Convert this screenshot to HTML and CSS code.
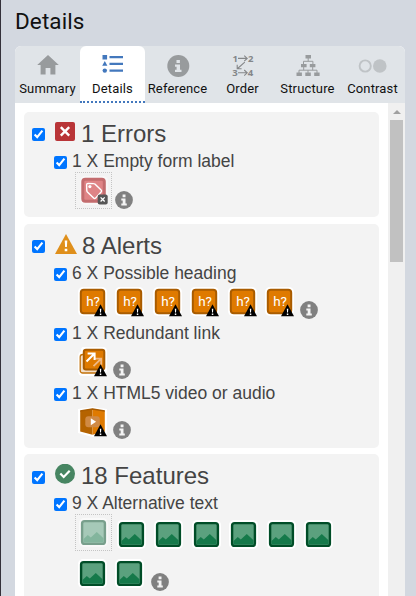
FILE: index.html
```html
<!DOCTYPE html>
<html lang="en">
<head>
<meta charset="utf-8">
<title>Details</title>
<link rel="stylesheet" href="styles.css">
</head>
<body>
<svg class="defs" aria-hidden="true">
  <symbol id="info" viewBox="0 0 18 18"><circle cx="9" cy="9" r="8.9" fill="currentColor"/><path d="M7.6 3.5h2.9v2.7H7.6zM6.3 7.4h4.2v5.1h1.3v2H6.3v-2h1.4V9.4H6.3z" fill="#f3f3f3"/></symbol>
  <symbol id="warn" viewBox="0 0 14 13"><path d="M7 .3 13.5 12.3H.5z" fill="#000"/><path d="M6.3 4.7h1.5L7.5 8.6h-.9zM6.3 9.6h1.5V11H6.3z" fill="#fff"/></symbol>
  <symbol id="picture" viewBox="0 0 30 30"><rect width="29" height="29" rx="5" fill="#fff"/><rect x="3.1" y="3.1" width="22.8" height="22.8" rx="2.5" fill="#5ba17e" stroke="#004d27" stroke-width="2.4"/><path d="M4.5 21 8.8 17l3 2.5 6-5.6 6.7 6.3v4.3h-20z" fill="#15794a"/></symbol>
  <symbol id="tile" viewBox="0 0 30 30"><rect width="29" height="29" rx="5" fill="#fff"/><rect x="2.8" y="2.8" width="23.4" height="23.4" rx="3" fill="#df7a00" stroke="#a95c00" stroke-width="2"/></symbol>
</svg>
<main class="sidebar">
  <h1>Details</h1>
  <div class="panel">
    <nav class="tabs">
      <a class="tab"><svg viewBox="0 0 40 26"><path fill="#989b9d" d="M20 2 30.8 12H27.4v9.5h-5V15h-4.8v6.5h-5V12H9.2z"/></svg>Summary</a>
      <a class="tab active"><svg viewBox="0 0 40 26"><path fill="#4378bd" d="M9.5 2h4.6v4.5H9.5zM11.8 8l2.6 4.7H9.2zM16.5 3H30v2.3H16.5zM16.5 9.8H30v2.3H16.5zM16.5 16.5H30v2.3H16.5z"/><circle cx="11.8" cy="17.6" r="2.2" fill="#4378bd"/></svg>Details</a>
      <a class="tab"><svg viewBox="0 0 40 26"><circle cx="20.3" cy="13" r="11" fill="#989b9d"/><path d="M18.5 6.9h3.4v3h-3.4zM17 11.4h5v5.3h1.5V19H17v-2.3h1.6v-3H17z" fill="#e0e4e8"/></svg>Reference</a>
      <a class="tab"><svg viewBox="0 0 40 26"><g class="numbers"><text x="9.5" y="8.8">1</text><text x="25" y="8.8">2</text><text x="9.3" y="23.2">3</text><text x="24.7" y="23.2">4</text></g><path fill="none" stroke="#858789" stroke-width="1.1" d="M15 5.4h9M21.2 2.6l3 2.8-3 2.8M15 19.8h9M21.2 17l3 2.8-3 2.8M21.8 9.2l-7.2 6.3M14.2 11.7v4.1h4.4"/></svg>Order</a>
      <a class="tab"><svg viewBox="0 0 40 26"><path fill="#989b9d" d="M17.5 2h5.5v3.6h-5.5zM13 11h5.6v3.3H13zM21.8 11h5.6v3.3h-5.6zM8.5 19.6h5.4V23H8.5zM17.3 19.6h5.5V23h-5.5zM26.2 19.6h5.4V23h-5.4z"/><path fill="none" stroke="#989b9d" d="M20.2 5v3.3M15.5 11V8.3h9.4V11M15.7 14v3.2M24.7 14v3.2M11 20v-2.8h18V20M20 20v-2.8"/></svg>Structure</a>
      <a class="tab"><svg viewBox="0 0 40 26"><circle cx="12.2" cy="13" r="5.6" fill="none" stroke="#bfc3c6" stroke-width="1.9"/><circle cx="26.8" cy="13" r="6.8" fill="#bfc3c6"/></svg>Contrast</a>
    </nav>
    <div class="viewport">
      <div class="results">
        <section class="group">
          <h2><input type="checkbox" checked aria-label="Errors"><svg class="kind" viewBox="0 0 22 20"><rect width="20" height="19" rx="2" fill="#b93538"/><path d="m5.8 5.2 8.4 8.4m0-8.4-8.4 8.4" stroke="#fff" stroke-width="2.4"/></svg>1 Errors</h2>
          <h3><input type="checkbox" checked aria-label="Empty form label">1 X Empty form label</h3>
          <div class="icons ringed-row">
            <span class="ring"><svg class="item" viewBox="0 0 30 30"><rect x="1" width="28" height="29" rx="5" fill="#f9f7f7"/><rect x="3.8" y="3.3" width="21.5" height="22" rx="2.5" fill="#df8486" stroke="#c36c6e" stroke-width="3"/><path d="M7.6 8.8q0-1.4 1.4-1.4l5.7.2q.7 0 1.2.5l6.2 6q1 1 0 2l-5.5 6q-1 1-2 0l-6.2-6q-.5-.5-.6-1.2z" fill="none" stroke="#fff" stroke-width="1.4"/><circle cx="10.9" cy="10.6" r="1.6" fill="#fff"/><rect x="18.7" y="18.6" width="10" height="9.8" rx="2" fill="#565656"/><path d="m21.6 21.4 4.1 4.1m0-4.1-4.1 4.1" stroke="#fff" stroke-width="1.3"/></svg></span>
            <svg class="info"><use href="#info"/></svg>
          </div>
        </section>
        <section class="group">
          <h2><input type="checkbox" checked aria-label="Alerts"><svg class="kind" viewBox="0 0 22 20"><path d="M11 0 22 20H0z" fill="#df8f1b"/><path d="M9.7 6.4h2.6l-.4 6.5h-1.8zM9.7 14.7h2.6v2.5H9.7z" fill="#fff"/></svg><span class="wide">8 Alerts</span></h2>
          <h3><input type="checkbox" checked aria-label="Possible heading">6 X Possible heading</h3>
          <div class="icons">
            <svg class="item" viewBox="0 0 30 30"><use href="#tile"/><text x="8.2" y="19.4" class="glyph">h?</text><use href="#warn" x="15.5" y="17" width="14" height="13"/></svg>
            <svg class="item" viewBox="0 0 30 30"><use href="#tile"/><text x="8.2" y="19.4" class="glyph">h?</text><use href="#warn" x="15.5" y="17" width="14" height="13"/></svg>
            <svg class="item" viewBox="0 0 30 30"><use href="#tile"/><text x="8.2" y="19.4" class="glyph">h?</text><use href="#warn" x="15.5" y="17" width="14" height="13"/></svg>
            <svg class="item" viewBox="0 0 30 30"><use href="#tile"/><text x="8.2" y="19.4" class="glyph">h?</text><use href="#warn" x="15.5" y="17" width="14" height="13"/></svg>
            <svg class="item" viewBox="0 0 30 30"><use href="#tile"/><text x="8.2" y="19.4" class="glyph">h?</text><use href="#warn" x="15.5" y="17" width="14" height="13"/></svg>
            <svg class="item" viewBox="0 0 30 30"><use href="#tile"/><text x="8.2" y="19.4" class="glyph">h?</text><use href="#warn" x="15.5" y="17" width="14" height="13"/></svg>
            <svg class="info"><use href="#info"/></svg>
          </div>
          <h3><input type="checkbox" checked aria-label="Redundant link">1 X Redundant link</h3>
          <div class="icons">
            <svg class="item" viewBox="0 0 30 30"><path d="M5 0h20q4 0 4 4v20l-3 5H5q-5 0-5-5V9q0-3 3-5 0-4 2-4z" fill="#fff"/><rect x="2.2" y="7.5" width="20" height="18.5" rx="2.5" fill="#f3dfc8" stroke="#c2710a" stroke-width="1.3"/><rect x="5.8" y="2.8" width="20.5" height="19.7" rx="2.2" fill="#df7a00" stroke="#a95c00" stroke-width="2"/><path d="m15.5 19.2 7.2-7.1M16.7 11.7h6.5v6" fill="none" stroke="#efb985" stroke-width="1.8"/><path d="m8.5 14.5 7.6-7.5M9.6 6.5h7v6.5" fill="none" stroke="#fff" stroke-width="2"/><use href="#warn" x="15.5" y="17" width="14" height="13"/></svg>
            <svg class="info"><use href="#info"/></svg>
          </div>
          <h3><input type="checkbox" checked aria-label="HTML5 video or audio">1 X HTML5 video or audio</h3>
          <div class="icons">
            <svg class="item" viewBox="0 0 30 30"><path d="M0 2 14.5 0 29 2v25l-14.5 3L0 26z" fill="#fff"/><path d="M2.2 4 14.5 1.8V27.8L2.2 24.5z" fill="#b56300"/><path d="M14.5 1.8 26.8 4v20.5l-12.3 3.3z" fill="#df7a00"/><path d="M2.2 4 14.5 2 26.8 4" fill="none" stroke="#a95c00" stroke-width="1.5"/><rect x="7.3" y="9.2" width="14.5" height="11" rx="3" fill="#d08a45"/><path d="m12.8 11.2 5.3 3.5-5.3 3.5z" fill="#fff"/><use href="#warn" x="15.5" y="17" width="14" height="13"/></svg>
            <svg class="info"><use href="#info"/></svg>
          </div>
        </section>
        <section class="group features">
          <h2><input type="checkbox" checked aria-label="Features"><svg class="kind" viewBox="0 0 22 20"><circle cx="10" cy="9.7" r="10" fill="#478562"/><path d="m5.3 9.5 3.4 3.5 6-6.2" fill="none" stroke="#fff" stroke-width="2.2"/></svg>18 Features</h2>
          <h3><input type="checkbox" checked aria-label="Alternative text">9 X Alternative text</h3>
          <div class="icons ringed-row">
            <span class="ring"><svg class="item faded"><use href="#picture"/></svg></span><svg class="item"><use href="#picture"/></svg><svg class="item"><use href="#picture"/></svg><svg class="item"><use href="#picture"/></svg><svg class="item"><use href="#picture"/></svg><svg class="item"><use href="#picture"/></svg><svg class="item"><use href="#picture"/></svg>
          </div>
          <div class="icons last">
            <svg class="item"><use href="#picture"/></svg><svg class="item"><use href="#picture"/></svg>
            <svg class="info"><use href="#info"/></svg>
          </div>
        </section>
      </div>
      <div class="scrollbar"><span class="arrow"></span><span class="thumb"></span></div>
    </div>
  </div>
</main>
</body>
</html>
```
FILE: styles.css
```css
* { box-sizing: border-box; }
body {
  margin: 0;
  height: 596px;
  overflow: hidden;
  background: #d3d8e0;
  font-family: "Liberation Sans", Arial, sans-serif;
  color: #444;
}
.defs { display: none; }
.sidebar {
  height: 596px;
  padding: 0 11px 0 14px;
  border-left: 1px solid #34313a;
}
h1 {
  margin: 0;
  height: 46px;
  font: 400 22.5px/43px Roboto, sans-serif;
  letter-spacing: .1px;
  color: #111;
}
.panel {
  height: 550px;
  border-radius: 6px 6px 0 0;
  overflow: hidden;
  background: #fff;
}
.tabs {
  display: grid;
  grid-template-columns: repeat(6, 65px);
  height: 57px;
  background: #e0e4e8;
}
.tab {
  display: flex;
  flex-direction: column;
  align-items: center;
  padding-top: 7px;
  font: 13px/19px Roboto, sans-serif;
  letter-spacing: .15px;
  color: #111;
}
.tab svg { width: 40px; height: 26px; flex: none; }
.active {
  background: #fff;
  border-radius: 6px 6px 0 0;
  border-bottom: 2px dotted #4378bd;
}
.numbers { font: 700 9.5px "Open Sans", sans-serif; fill: #858789; }
.viewport { display: flex; height: 493px; }
.results {
  width: 373px;
  padding: 9px 9px 0;
}
.group {
  height: 105px;
  margin-bottom: 7px;
  padding-left: 8px;
  border-radius: 5px;
  background: #f3f3f3;
}
.group:nth-child(2) { height: 224px; margin-bottom: 6px; }
.group.features { height: 160px; }
input { flex: none; width: 13px; height: 13px; margin: 0; }
h2, h3 { display: flex; margin: 0; font-weight: 400; white-space: nowrap; }
h2 { height: 38px; font-size: 24px; line-height: 43px; }
h2 input { margin: 16px 10px 0 0; }
.features h2 input { margin-top: 17px; }
.kind { width: 22px; height: 20px; margin: 10px 4px 0 0; flex: none; }
.wide { margin-left: 1px; }
h3 { height: 22px; padding-left: 22px; font-size: 17.5px; line-height: 22px; }
h3 input { margin: 6px 5px 0 0; }
.icons { display: flex; height: 38px; padding: 3px 0 0 46px; }
.item { width: 30px; height: 30px; margin-right: 7.4px; flex: none; }
.info { width: 18px; height: 18px; margin-top: 14px; color: #808080; flex: none; }
.icons .item + .info { margin-left: -2.5px; }
.ringed-row { height: 44px; padding: 0 0 0 43px; }
.ring {
  width: 37px;
  height: 37px;
  padding: 3px 0 0 3px;
  border: 1px dotted #c4c4c4;
  flex: none;
}
.ring + .info { margin: 19px 0 0 3px; }
.ring + .item { margin-left: 5px; }
.ringed-row > .item { margin-top: 6px; }
.faded { opacity: .5; }
.last { padding-top: 1px; }
.features .icons .item + .info { margin: 14px 0 0 -2px; }
.glyph { font: 13.5px Roboto, sans-serif; fill: #fff; }
.scrollbar {
  width: 17px;
  padding: 7px 2px 0;
  background: #f0f0f0;
}
.arrow {
  display: block;
  width: 8px;
  height: 4px;
  margin: 0 0 6px 3px;
  background: #a0a0a0;
  clip-path: polygon(50% 0, 100% 100%, 0 100%);
}
.thumb { display: block; height: 142px; background: #c1c1c1; }
```
